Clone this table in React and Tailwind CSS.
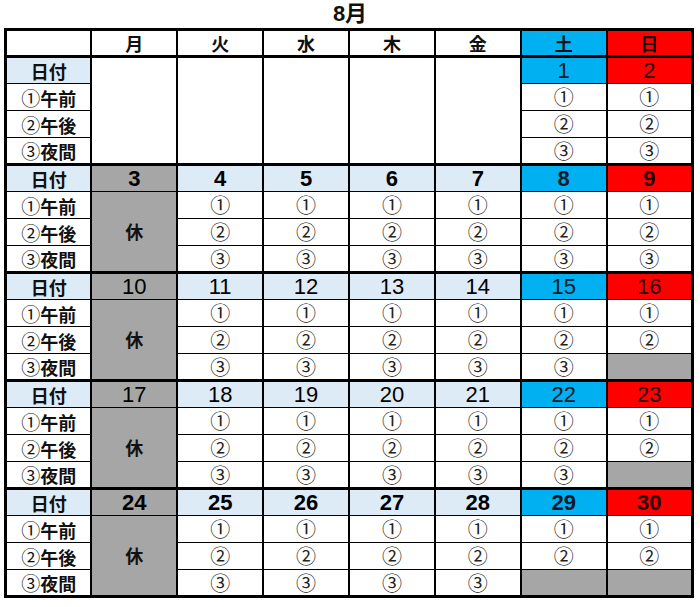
import React from "react";

const JP = { fontFamily: '"Liberation Sans", "Noto Sans CJK JP", sans-serif' };
const CJK = { fontFamily: '"Noto Sans CJK JP", sans-serif' };

const weeks = [
  { dates: [null, null, null, null, null, 1, 2], gray3: [] },
  { dates: [3, 4, 5, 6, 7, 8, 9], gray3: [], bold: true },
  { dates: [10, 11, 12, 13, 14, 15, 16], gray3: [6] },
  { dates: [17, 18, 19, 20, 21, 22, 23], gray3: [6] },
  { dates: [24, 25, 26, 27, 28, 29, 30], gray3: [5, 6], bold: true },
];

const days = ["月", "火", "水", "木", "金", "土", "日"];
const slots = [
  ["①", "午前"],
  ["②", "午後"],
  ["③", "夜間"],
];
const marks = ["①", "②", "③"];

const dayBg = (i) =>
  i === 5 ? "bg-[#00b0f0]" : i === 6 ? "bg-[#ff0000]" : "bg-white";

const Label = ({ children, top, blue }) => (
  <td
    style={CJK}
    className={`h-[27px] border-x-2 border-black text-center text-[18px] font-bold leading-none text-[#111] ${
      top ? "border-t-[3px] border-b" : "border-y"
    } ${blue ? "bg-[#ddebf7]" : "bg-white"}`}
  >
    {children}
  </td>
);

const Mark = ({ children, gray }) => (
  <td
    style={CJK}
    className={`h-[27px] border-x-2 border-y border-black text-center text-[20px] leading-none text-[#222] ${
      gray ? "bg-[#a6a6a6]" : "bg-white"
    }`}
  >
    {gray ? "" : children}
  </td>
);

const App = () => {
  return (
    <div className="w-[700px] h-[607px] bg-white" style={JP}>
      <div className="h-[28px] flex items-center justify-center">
        <span style={JP} className="text-[22px] font-bold leading-none text-[#111]">
          8月
        </span>
      </div>
      <table className="ml-[4px] w-[690px] table-fixed border-collapse border-[3px] border-black">
        <tbody>
          <tr>
            <td className="h-[27px] border-x-2 border-b-2 border-black bg-white" />
            {days.map((d, i) => (
              <td
                key={d}
                style={CJK}
                className={`h-[27px] border-x-2 border-b-2 border-black text-center text-[18px] font-bold leading-none text-[#111] ${dayBg(i)}`}
              >
                {d}
              </td>
            ))}
          </tr>
          {weeks.map((w, wi) => (
            <React.Fragment key={wi}>
              <tr>
                <Label top blue>
                  日付
                </Label>
                {wi === 0 ? (
                  <>
                    <td rowSpan={4} className="border-x-2 border-t-[3px] border-black bg-white" />
                    <td rowSpan={4} className="border-x-2 border-t-[3px] border-black bg-white" />
                    <td rowSpan={4} className="border-x-2 border-t-[3px] border-black bg-white" />
                    <td rowSpan={4} className="border-x-2 border-t-[3px] border-black bg-white" />
                    <td rowSpan={4} className="border-x-2 border-t-[3px] border-black bg-white" />
                  </>
                ) : null}
                {w.dates.map((d, i) => {
                  if (d === null) return null;
                  const bg =
                    i === 0
                      ? "bg-[#a6a6a6]"
                      : i === 5
                      ? "bg-[#00b0f0]"
                      : i === 6
                      ? "bg-[#ff0000]"
                      : "bg-[#ddebf7]";
                  return (
                    <td
                      key={i}
                      className={`h-[27px] border-x-2 border-t-[3px] border-b border-black text-center text-[22px] leading-none ${
                        w.bold ? "font-bold" : "font-normal"
                      } ${i === 6 ? "text-[#2a0000]" : i === 5 ? "text-[#061a2a]" : "text-[#000]"} ${bg}`}
                    >
                      {d}
                    </td>
                  );
                })}
              </tr>
              {slots.map(([c, s], si) => (
                <tr key={s}>
                  <Label>
                    <span className="text-[19px] font-normal">{c}</span>
                    {s}
                  </Label>
                  {wi === 0 ? (
                    <>
                      <Mark>{marks[si]}</Mark>
                      <Mark>{marks[si]}</Mark>
                    </>
                  ) : (
                    <>
                      {si === 0 ? (
                        <td
                          rowSpan={3}
                          style={CJK}
                          className="border-x-2 border-y border-black bg-[#a6a6a6] text-center text-[18px] font-bold text-[#111]"
                        >
                          休
                        </td>
                      ) : null}
                      {[1, 2, 3, 4, 5, 6].map((i) => (
                        <Mark key={i} gray={si === 2 && w.gray3.includes(i)}>
                          {marks[si]}
                        </Mark>
                      ))}
                    </>
                  )}
                </tr>
              ))}
            </React.Fragment>
          ))}
        </tbody>
      </table>
    </div>
  );
};

export default App;
